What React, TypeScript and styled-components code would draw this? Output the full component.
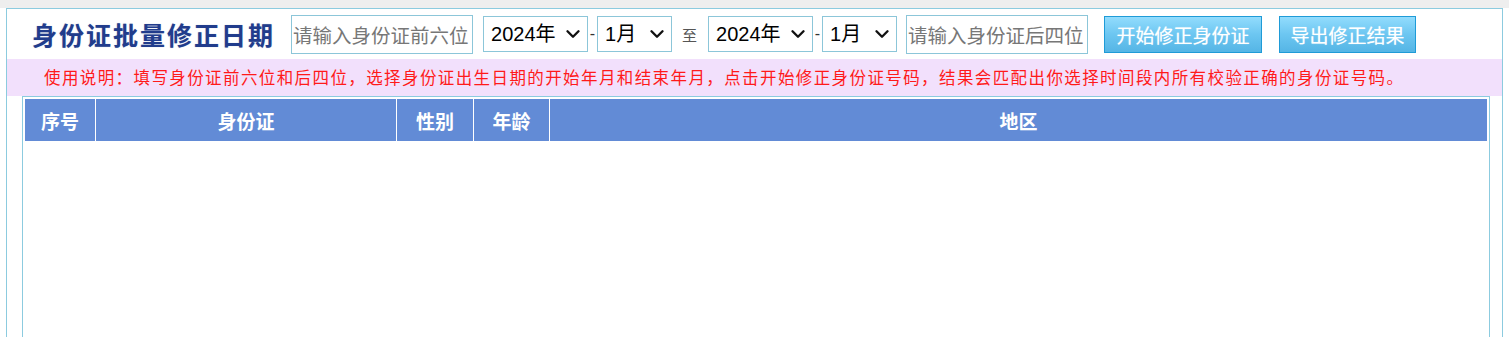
import styled, { createGlobalStyle } from "styled-components";
import { ChevronDown } from "lucide-react";

const GlobalStyle = createGlobalStyle`
  html, body {
    margin: 0;
    padding: 0;
    background: #ffffff;
    font-family: "Liberation Sans", "Noto Sans CJK SC", sans-serif;
  }
`;

const TopStrip = styled.div`
  height: 8px;
  background: #eeeeee;
`;

const Page = styled.div`
  margin: 0 6px;
  height: 329px;
  border: 1px solid #8ccbdf;
  border-bottom: none;
  box-sizing: border-box;
`;

const Toolbar = styled.div`
  display: flex;
  align-items: center;
  height: 50px;
  padding-left: 25px;
`;

const Title = styled.h1`
  margin: 0 16px 0 0;
  font-family: "Noto Sans CJK SC", sans-serif;
  font-size: 25px;
  font-weight: 700;
  letter-spacing: 2px;
  color: #213c8c;
  line-height: 30px;
  text-shadow: 0 0 1px rgba(33, 60, 140, 0.35);
`;

const TextInput = styled.input<{ $gap?: number }>`
  box-sizing: border-box;
  width: 182px;
  height: 39px;
  padding: 0 1px;
  margin-right: ${(p) => p.$gap ?? 0}px;
  border: 1px solid #8cc6d9;
  outline: none;
  font-family: "Noto Sans CJK SC", sans-serif;
  font-size: 19.5px;
  &::placeholder {
    color: #777777;
  }
`;

const SelectWrap = styled.div<{ $w: number }>`
  position: relative;
  width: ${(p) => p.$w}px;
  height: 36px;
  svg {
    position: absolute;
    right: 4px;
    top: 7px;
    pointer-events: none;
    color: #111111;
  }
`;

const Select = styled.select`
  box-sizing: border-box;
  appearance: none;
  -webkit-appearance: none;
  width: 100%;
  height: 100%;
  padding: 0 7px;
  border: 1px solid #8cc6d9;
  border-radius: 0;
  background: #ffffff;
  color: #000000;
  font-family: "Liberation Sans", "Noto Sans CJK SC", sans-serif;
  font-size: 20px;
  outline: none;
`;

const Dash = styled.span`
  width: 9px;
  text-align: center;
  font-size: 16px;
  color: #333333;
`;

const To = styled.span`
  margin: 0 11px 0 10px;
  font-family: "Noto Sans CJK SC", sans-serif;
  font-size: 15px;
  color: #555555;
`;

const Spacer = styled.span<{ $w: number }>`
  width: ${(p) => p.$w}px;
`;

const ActionButton = styled.button<{ $w: number; $gap?: number }>`
  box-sizing: border-box;
  width: ${(p) => p.$w}px;
  height: 37px;
  margin-left: ${(p) => p.$gap ?? 0}px;
  padding: 0;
  border: 1px solid #1f9bd7;
  background: linear-gradient(to bottom, #92dcfd 0%, #6cc6f1 50%, #55b5e5 100%);
  color: #ffffff;
  font-family: "Noto Sans CJK SC", sans-serif;
  font-size: 19px;
  text-shadow: 0 0 1px rgba(255, 255, 255, 0.6);
  cursor: pointer;
`;

const Notice = styled.div`
  height: 37px;
  padding-left: 37px;
  background: #f2e0fc;
  color: #ff1a1a;
  font-family: "Noto Sans CJK SC", serif;
  font-size: 16.5px;
  letter-spacing: 1.4px;
  line-height: 37px;
  white-space: nowrap;
`;

const TableBox = styled.div`
  box-sizing: border-box;
  margin: 0 12px 0 15px;
  height: 250px;
  padding: 2px;
  border: 1px solid #8ccbdf;
  border-bottom: none;
`;

const Table = styled.table`
  width: 100%;
  border-collapse: collapse;
  table-layout: fixed;
`;

const HeadCell = styled.th<{ $w?: number }>`
  width: ${(p) => (p.$w ? `${p.$w}px` : "auto")};
  height: 42px;
  padding: 0;
  background: #628bd6;
  border-left: 1px solid #ffffff;
  color: #ffffff;
  font-family: "Noto Sans CJK SC", sans-serif;
  font-size: 19px;
  font-weight: 700;
  text-align: center;
  &:first-child {
    border-left: none;
  }
`;

const years = ["2024年", "2023年", "2022年", "2021年", "2020年"];
const months = Array.from({ length: 12 }, (_, i) => `${i + 1}月`);

export default function App() {
  return (
    <>
      <GlobalStyle />
      <TopStrip />
      <Page>
        <Toolbar>
          <Title>身份证批量修正日期</Title>
          <TextInput placeholder="请输入身份证前六位" $gap={10} />
          {renderDate()}
          <To>至</To>
          {renderDate()}
          <Spacer $w={9} />
          <TextInput placeholder="请输入身份证后四位" />
          <ActionButton $w={158} $gap={16}>
            开始修正身份证
          </ActionButton>
          <ActionButton $w={137} $gap={17}>
            导出修正结果
          </ActionButton>
        </Toolbar>
        <Notice>
          使用说明：填写身份证前六位和后四位，选择身份证出生日期的开始年月和结束年月，点击开始修正身份证号码，结果会匹配出你选择时间段内所有校验正确的身份证号码。
        </Notice>
        <TableBox>
          <Table>
            <thead>
              <tr>
                <HeadCell $w={70}>序号</HeadCell>
                <HeadCell $w={300}>身份证</HeadCell>
                <HeadCell $w={76}>性别</HeadCell>
                <HeadCell $w={75}>年龄</HeadCell>
                <HeadCell>地区</HeadCell>
              </tr>
            </thead>
            <tbody />
          </Table>
        </TableBox>
      </Page>
    </>
  );

  function renderDate() {
    return (
      <>
        <SelectWrap $w={105}>
          <Select defaultValue="2024年">
            {years.map((y) => (
              <option key={y}>{y}</option>
            ))}
          </Select>
          <ChevronDown size={22} strokeWidth={2.6} />
        </SelectWrap>
        <Dash>-</Dash>
        <SelectWrap $w={75}>
          <Select defaultValue="1月">
            {months.map((m) => (
              <option key={m}>{m}</option>
            ))}
          </Select>
          <ChevronDown size={22} strokeWidth={2.6} />
        </SelectWrap>
      </>
    );
  }
}
